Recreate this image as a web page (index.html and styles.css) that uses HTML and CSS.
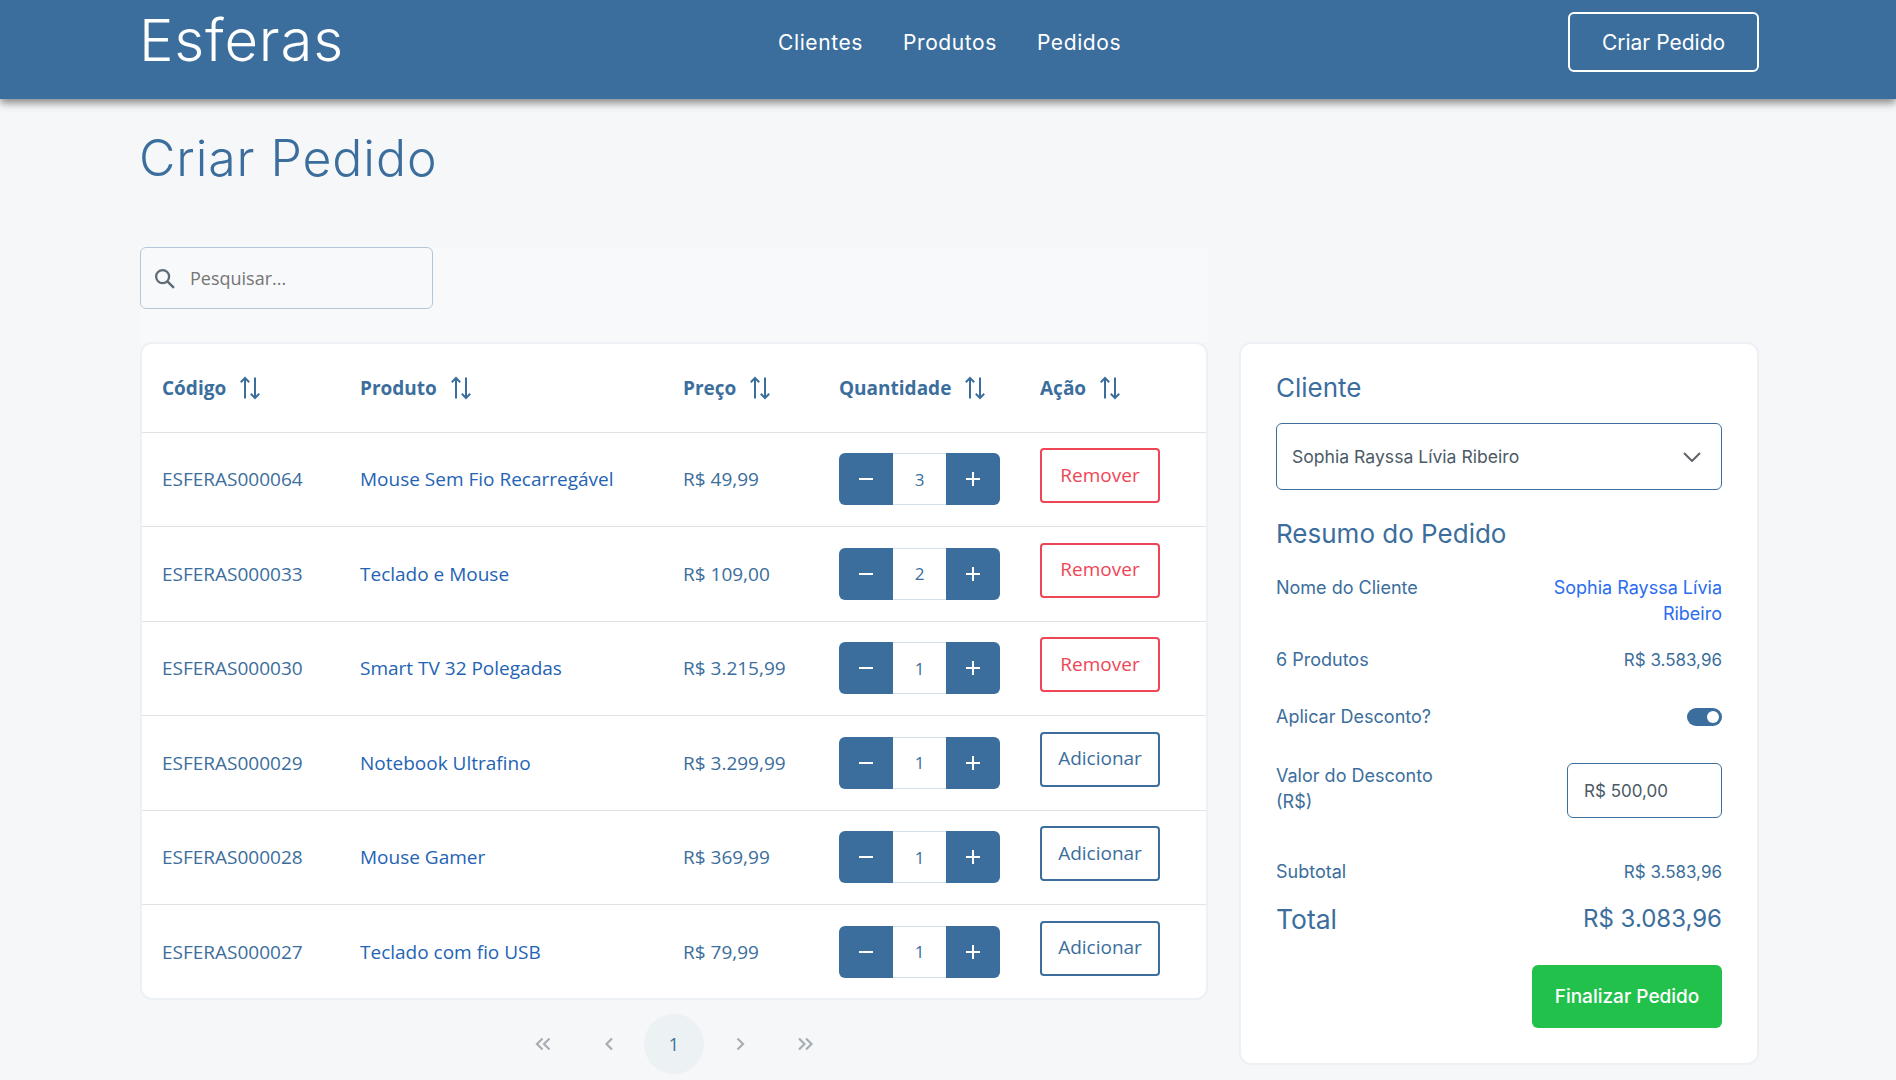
FILE: index.html
```html
<!DOCTYPE html>
<html lang="pt-BR">
<head>
    <meta charset="UTF-8">
    <title>Esferas - Criar Pedido</title>
    <link rel="stylesheet" href="styles.css">
</head>
<body>
    <svg class="sprite" width="0" height="0">
        <symbol id="sort" viewBox="0 0 22 24">
            <path d="M6 22.5V2M1.8 6.2L6 2l4.2 4.2M16 1.5V22M11.8 17.8L16 22l4.2-4.2" fill="none" stroke="currentColor" stroke-width="2"/>
        </symbol>
        <symbol id="minus" viewBox="0 0 16 16">
            <path d="M1 8h14" fill="none" stroke="currentColor" stroke-width="2"/>
        </symbol>
        <symbol id="plus" viewBox="0 0 16 16">
            <path d="M1 8h14M8 1v14" fill="none" stroke="currentColor" stroke-width="2"/>
        </symbol>
    </svg>

    <header class="topbar">
        <a class="logo">Esferas</a>
        <nav class="nav">
            <a>Clientes</a>
            <a>Produtos</a>
            <a>Pedidos</a>
        </nav>
        <a class="btn-outline-white">Criar Pedido</a>
    </header>

    <main class="page">
        <h1 class="page-title">Criar Pedido</h1>

        <div class="toolbar">
            <div class="search">
                <svg class="search-icon" viewBox="0 0 20 20" width="21" height="21">
                    <circle cx="8.2" cy="8.2" r="6.2" fill="none" stroke="currentColor" stroke-width="2.2"/>
                    <path d="M12.8 12.8L19 19" fill="none" stroke="currentColor" stroke-width="2.4"/>
                </svg>
                <span>Pesquisar...</span>
            </div>
        </div>

        <div class="columns">
            <section>
                <div class="card table-card">
                    <table class="orders">
                        <thead>
                            <tr>
                                <th class="col-code">Código <svg class="sort"><use href="#sort"/></svg></th>
                                <th class="col-product">Produto <svg class="sort"><use href="#sort"/></svg></th>
                                <th class="col-price">Preço <svg class="sort"><use href="#sort"/></svg></th>
                                <th class="col-qty">Quantidade <svg class="sort"><use href="#sort"/></svg></th>
                                <th>Ação <svg class="sort"><use href="#sort"/></svg></th>
                            </tr>
                        </thead>
                        <tbody>
                            <tr>
                                <td>ESFERAS000064</td>
                                <td><a class="link">Mouse Sem Fio Recarregável</a></td>
                                <td>R$ 49,99</td>
                                <td>
                                    <div class="stepper">
                                        <button><svg><use href="#minus"/></svg></button>
                                        <span>3</span>
                                        <button><svg><use href="#plus"/></svg></button>
                                    </div>
                                </td>
                                <td><button class="action remove">Remover</button></td>
                            </tr>
                            <tr>
                                <td>ESFERAS000033</td>
                                <td><a class="link">Teclado e Mouse</a></td>
                                <td>R$ 109,00</td>
                                <td>
                                    <div class="stepper">
                                        <button><svg><use href="#minus"/></svg></button>
                                        <span>2</span>
                                        <button><svg><use href="#plus"/></svg></button>
                                    </div>
                                </td>
                                <td><button class="action remove">Remover</button></td>
                            </tr>
                            <tr>
                                <td>ESFERAS000030</td>
                                <td><a class="link">Smart TV 32 Polegadas</a></td>
                                <td>R$ 3.215,99</td>
                                <td>
                                    <div class="stepper">
                                        <button><svg><use href="#minus"/></svg></button>
                                        <span>1</span>
                                        <button><svg><use href="#plus"/></svg></button>
                                    </div>
                                </td>
                                <td><button class="action remove">Remover</button></td>
                            </tr>
                            <tr>
                                <td>ESFERAS000029</td>
                                <td><a class="link">Notebook Ultrafino</a></td>
                                <td>R$ 3.299,99</td>
                                <td>
                                    <div class="stepper">
                                        <button><svg><use href="#minus"/></svg></button>
                                        <span>1</span>
                                        <button><svg><use href="#plus"/></svg></button>
                                    </div>
                                </td>
                                <td><button class="action">Adicionar</button></td>
                            </tr>
                            <tr>
                                <td>ESFERAS000028</td>
                                <td><a class="link">Mouse Gamer</a></td>
                                <td>R$ 369,99</td>
                                <td>
                                    <div class="stepper">
                                        <button><svg><use href="#minus"/></svg></button>
                                        <span>1</span>
                                        <button><svg><use href="#plus"/></svg></button>
                                    </div>
                                </td>
                                <td><button class="action">Adicionar</button></td>
                            </tr>
                            <tr>
                                <td>ESFERAS000027</td>
                                <td><a class="link">Teclado com fio USB</a></td>
                                <td>R$ 79,99</td>
                                <td>
                                    <div class="stepper">
                                        <button><svg><use href="#minus"/></svg></button>
                                        <span>1</span>
                                        <button><svg><use href="#plus"/></svg></button>
                                    </div>
                                </td>
                                <td><button class="action">Adicionar</button></td>
                            </tr>
                        </tbody>
                    </table>
                </div>

                <div class="pagination">
                    <a><svg viewBox="0 0 18 14"><path d="M9.500 1.500L4 7l5.500 5.500M16.500 1.500L11 7l5.500 5.500" /></svg></a>
                    <a><svg viewBox="0 0 18 14"><path d="M13 1.500L7.500 7l5.500 5.500" /></svg></a>
                    <a class="current">1</a>
                    <a><svg viewBox="0 0 18 14"><path d="M6.500 1.500L12 7l-5.500 5.500" /></svg></a>
                    <a><svg viewBox="0 0 18 14"><path d="M2 1.500L7.500 7 2 12.500M9 1.500L14.500 7 9 12.500" /></svg></a>
                </div>
            </section>

            <aside class="card summary">
                <h2 class="summary-title">Cliente</h2>
                <div class="select">
                    <span>Sophia Rayssa Lívia Ribeiro</span>
                    <svg viewBox="0 0 18 10" width="18" height="10"><path d="M1 1l8 8 8-8" fill="none" stroke="currentColor" stroke-width="2"/></svg>
                </div>

                <h2 class="summary-title resume">Resumo do Pedido</h2>
                <div class="line line-name">
                    <span>Nome do Cliente</span>
                    <a class="client-name">Sophia Rayssa Lívia Ribeiro</a>
                </div>
                <div class="line line-products">
                    <span>6 Produtos</span>
                    <span class="value">R$ 3.583,96</span>
                </div>
                <div class="line line-toggle">
                    <span>Aplicar Desconto?</span>
                    <span class="toggle"></span>
                </div>
                <div class="line line-discount">
                    <span class="discount-label">Valor do Desconto (R$)</span>
                    <span class="discount-input">R$ 500,00</span>
                </div>
                <div class="line line-subtotal">
                    <span>Subtotal</span>
                    <span class="value">R$ 3.583,96</span>
                </div>
                <div class="line total">
                    <span>Total</span>
                    <span class="total-value">R$ 3.083,96</span>
                </div>
                <div class="finish-row">
                    <button class="finish">Finalizar Pedido</button>
                </div>
            </aside>
        </div>
    </main>
</body>
</html>
```

FILE: styles.css
```css
* {
    box-sizing: border-box;
}
body {
    margin: 0;
    background-color: #f6f7f9;
    color: #3b6e9c;
    font-family: "Open Sans", sans-serif;
    font-size: 19px;
}
.sprite {
    display: block;
    height: 0;
}
.topbar {
    display: grid;
    grid-template-columns: 639px 1fr auto;
    align-items: center;
    height: 99px;
    padding: 0 137px 0 139px;
    background-color: #3b6e9c;
    box-shadow: 0 4px 8px rgba(0, 0, 0, 0.45);
    color: #fff;
    font-family: Inter, sans-serif;
}
.logo {
    font-size: 58px;
    font-weight: 300;
    letter-spacing: 0.8px;
    margin-top: -20px;
}
.nav {
    display: flex;
    gap: 40px;
    font-size: 21px;
    letter-spacing: 0.6px;
    margin-top: -15px;
}
.btn-outline-white {
    display: flex;
    align-items: center;
    justify-content: center;
    width: 191px;
    height: 60px;
    margin-top: -15px;
    border: 2px solid #fff;
    border-radius: 6px;
    font-size: 21px;
}
.page {
    padding: 0 137px 0 139px;
}
.page-title {
    margin: 0;
    padding-top: 28px;
    font-family: Inter, sans-serif;
    font-size: 50px;
    font-weight: 300;
    letter-spacing: 0.9px;
    line-height: 62px;
}
.toolbar {
    width: 1068px;
    height: 95px;
    margin: 58px 0 0 1px;
    background-color: #f8f9fb;
}
.search {
    display: flex;
    align-items: center;
    gap: 15px;
    width: 293px;
    height: 62px;
    padding-left: 13px;
    border: 1px solid #b4c7d9;
    border-radius: 6px;
    color: #757575;
    font-size: 18px;
}
.search-icon {
    color: #5f6b76;
}
.columns {
    display: grid;
    grid-template-columns: 1068px 520px;
    gap: 31px;
    margin-left: 1px;
}
.card {
    background-color: #fff;
    border: 2px solid #edf0f4;
    border-radius: 12px;
}
.orders {
    width: 100%;
    border-collapse: collapse;
    table-layout: fixed;
}
.orders th {
    height: 88px;
    padding: 0 0 0 20px;
    border-bottom: 1px solid #dfe3e8;
    text-align: left;
    font-size: 19px;
    font-weight: 700;
    white-space: nowrap;
}
.orders td {
    height: 94.5px;
    padding: 0 0 0 20px;
    border-bottom: 1px solid #dfe3e8;
}
.orders tr:last-child td {
    height: 93.5px;
    border-bottom: 0;
}
.col-code {
    width: 198px;
}
.col-product {
    width: 323px;
}
.col-price {
    width: 156px;
}
.col-qty {
    width: 201px;
}
.sort {
    width: 22px;
    height: 24px;
    margin-left: 8px;
    vertical-align: -5px;
}
.link {
    color: #2463b4;
}
.stepper {
    display: flex;
    width: 161px;
    height: 52px;
}
.stepper button {
    display: flex;
    align-items: center;
    justify-content: center;
    width: 54px;
    padding: 0;
    border: 0;
    background-color: #3b6e9c;
    color: #fff;
}
.stepper button:first-child {
    border-radius: 6px 0 0 6px;
}
.stepper button:last-child {
    border-radius: 0 6px 6px 0;
}
.stepper svg {
    width: 16px;
    height: 16px;
}
.stepper span {
    flex: 1;
    display: flex;
    align-items: center;
    justify-content: center;
    border: 1px solid #d5e0ea;
    border-width: 1px 0;
    font-size: 17px;
}
.action {
    display: block;
    width: 120px;
    height: 55px;
    margin-bottom: 7px;
    padding: 0 0 2px;
    background-color: #fff;
    border: 2px solid #3b6e9c;
    border-radius: 4px;
    color: #3b6e9c;
    font-family: inherit;
    font-size: 19px;
}
.action.remove {
    border-color: #ef4656;
    color: #ef4656;
}
.pagination {
    display: flex;
    justify-content: center;
    gap: 6px;
    margin-top: 14px;
}
.pagination a {
    display: flex;
    align-items: center;
    justify-content: center;
    width: 60px;
    height: 60px;
    border-radius: 50%;
    font-size: 18px;
}
.pagination svg {
    width: 18px;
    height: 14px;
    fill: none;
    stroke: #a7adb3;
    stroke-width: 2.2;
}
.pagination .current {
    background-color: #ecf1f4;
}
.summary {
    height: 723px;
    padding: 0 35px 0 35px;
    font-family: Inter, sans-serif;
    font-size: 18px;
}
.summary-title {
    margin: 0;
    padding-top: 26px;
    font-size: 26px;
    font-weight: 400;
    line-height: 36px;
}
.resume {
    padding-top: 26px;
}
.select {
    display: flex;
    align-items: center;
    justify-content: space-between;
    height: 67px;
    margin-top: 17px;
    padding: 0 20px 0 15px;
    border: 1px solid #3b6e9c;
    border-radius: 6px;
    color: #4c5a66;
    font-size: 17.6px;
}
.select svg {
    color: #5f6468;
}
.line {
    display: flex;
    justify-content: space-between;
    line-height: 26px;
}
.value {
    font-size: 17px;
}
.line-name {
    margin-top: 23px;
}
.client-name {
    width: 190px;
    color: #2b6df0;
    text-align: right;
}
.line-products {
    margin-top: 20px;
}
.line-toggle {
    align-items: center;
    margin-top: 31px;
}
.toggle {
    position: relative;
    width: 35px;
    height: 18px;
    border-radius: 9px;
    background-color: #3b6e9c;
}
.toggle::after {
    content: "";
    position: absolute;
    top: 3px;
    right: 3px;
    width: 12px;
    height: 12px;
    border-radius: 50%;
    background-color: #fff;
}
.line-discount {
    align-items: center;
    margin-top: 33px;
}
.discount-label {
    width: 190px;
    padding-bottom: 3px;
}
.discount-input {
    display: flex;
    align-items: center;
    width: 155px;
    height: 55px;
    padding-left: 16px;
    border: 1px solid #3b6e9c;
    border-radius: 6px;
    color: #4c5a66;
    font-size: 17px;
}
.line-subtotal {
    margin-top: 41px;
}
.total {
    margin-top: 16px;
    font-size: 26.5px;
    line-height: 36px;
}
.total-value {
    font-size: 24px;
}
.finish-row {
    display: flex;
    justify-content: flex-end;
    margin-top: 28px;
}
.finish {
    width: 190px;
    height: 63px;
    padding: 0;
    border: 0;
    border-radius: 6px;
    background-color: #22c14c;
    color: #fff;
    font-family: inherit;
    font-size: 19px;
    font-weight: 500;
}
```
